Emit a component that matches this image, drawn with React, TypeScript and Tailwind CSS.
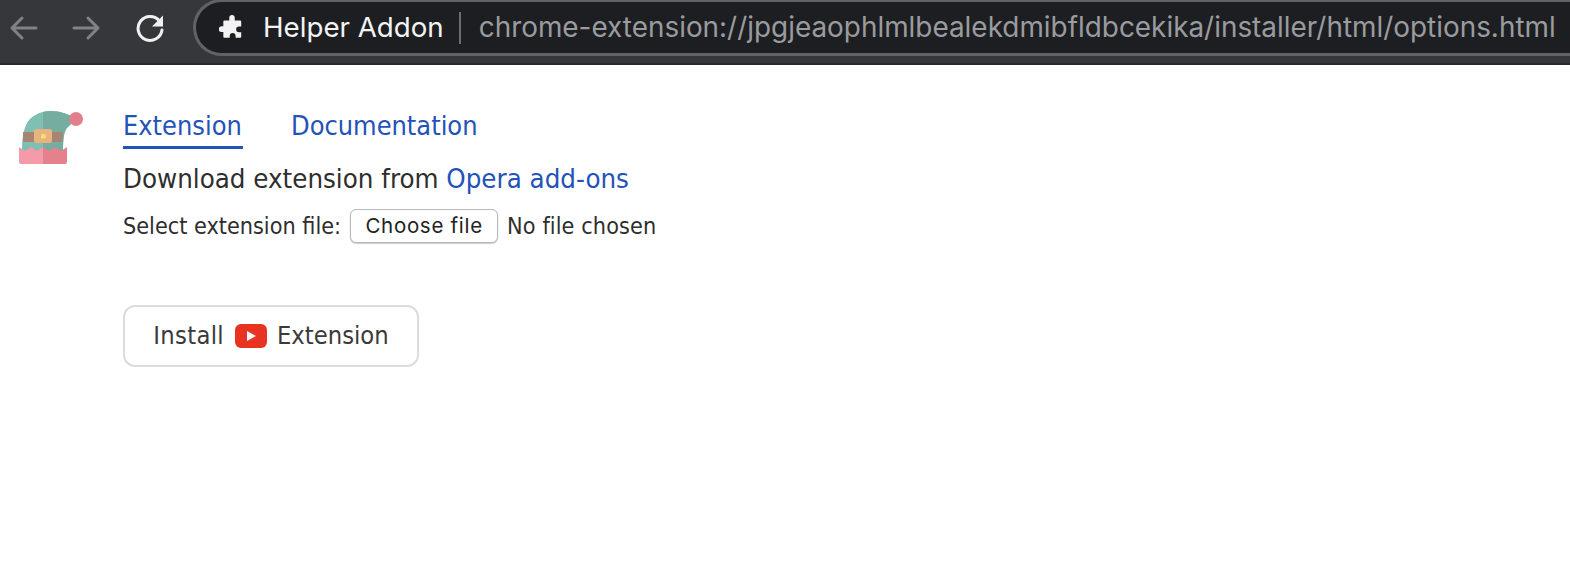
export default function App() {
  const body = { fontFamily: '"DejaVu Sans", sans-serif', fontStretch: 'condensed' };
  return (
    <div className="w-[1570px] h-[574px] bg-white overflow-hidden flex flex-col">
      <header className="h-[65px] shrink-0 bg-[#36373b] border-b-2 border-[#28292c] flex items-start">
        <div className="w-[193px] h-[56px] shrink-0 flex items-center text-[#818285]">
          <svg width="30" height="28" viewBox="0 0 30 28" className="ml-[8px]" fill="none" stroke="currentColor" strokeWidth="3" strokeLinecap="round" strokeLinejoin="round"><path d="M4 14h24M14 4 4 14l10 10" /></svg>
          <svg width="30" height="28" viewBox="0 0 30 28" className="ml-[34px]" fill="none" stroke="currentColor" strokeWidth="3" strokeLinecap="round" strokeLinejoin="round"><path d="M2 14h24M16 4l10 10-10 10" /></svg>
          <svg width="30" height="30" viewBox="0 0 30 30" className="ml-[33px] text-[#f1f1f2]" fill="none"><path d="M24.500 8A12 12 0 1 0 27 17" stroke="currentColor" strokeWidth="3" strokeLinecap="round" /><path d="M28 2.500v11H17z" fill="currentColor" /></svg>
        </div>
        <div className="flex-1 h-[57px] -mt-[1px] rounded-l-[29px] border-[3px] border-r-0 border-[#616266] bg-[#1d1e21] flex items-center pl-[23px] whitespace-nowrap" style={{ fontFamily: 'Inter, sans-serif' }}>
          <svg width="26" height="26" viewBox="0 0 24 24" className="shrink-0 text-[#f2f2f2]" fill="currentColor"><path d="M9.500 2.500a2.500 2.500 0 0 1 5 0V5h5a1 1 0 0 1 1 1v4.500h-2a2.700 2.700 0 0 0 0 5.400h2V20a1 1 0 0 1-1 1h-4.200v-1.600a2.700 2.700 0 0 0-5.400 0V21H5a1 1 0 0 1-1-1v-4.200H2.500a2.700 2.700 0 0 1 0-5.400H4V6a1 1 0 0 1 1-1h4.500z" /></svg>
          <span className="ml-[18px] text-[27.7px] text-[#f3f3f4]">Helper Addon</span>
          <span className="ml-[15px] w-[2px] h-[32px] bg-[#6c6d70]" />
          <span className="ml-[18px] text-[27.9px] text-[#9a9b9e]">chrome-extension://jpgjeaophlmlbealekdmibfldbcekika/installer/html/options.html</span>
        </div>
      </header>
      <main className="flex-1 flex pl-[18px] pt-[45px] whitespace-nowrap" style={body}>
        <svg width="66" height="54" viewBox="0 0 66 54" className="shrink-0">
          <path d="M4 42C4 30 5 22 8 15 12 6 22 1 33 1c9 0 18 3 25 8l-8 8C46 20 45 28 45 42z" fill="#80c0b2" />
          <path d="M25 2c2.500-.7 5-1 8-1 9 0 18 3 25 8l-8 8C46 20 45 28 45 42H25z" fill="#75ada1" />
          <circle cx="58" cy="9" r="7" fill="#e27f8c" />
          <path d="M5 22h39.500v10H5z" fill="#a88475" />
          <rect x="16" y="19" width="18" height="14" rx="2" fill="#e9b37f" />
          <rect x="23" y="24" width="5" height="4.500" rx="1.500" fill="#f5e06d" />
          <path d="M1 37l6 4 6-4 6 4 6-4v17H3a2 2 0 0 1-2-2z" fill="#f49aa8" />
          <path d="M25 37l6 4 6-4 6 4 6-4v15a2 2 0 0 1-2 2H25z" fill="#e5808d" />
        </svg>
        <div className="ml-[39px] flex flex-col items-start">
          <nav className="flex h-[40px] text-[#2352b8] text-[26.9px] leading-[32px]">
            <a className="w-[120px] h-[39px] border-b-[3px] border-[#2352b8]">Extension</a>
            <a className="ml-[48px]">Documentation</a>
          </nav>
          <p className="mt-[11px] text-[27.4px] leading-[36px] text-[#2e2e2e]">Download extension from <a className="text-[#2352b8]">Opera add-ons</a></p>
          <div className="mt-[12px] flex items-center h-[34px] text-[23.2px] text-[#2e2e2e]">
            <span>Select extension file:</span>
            <button className="ml-[9px] w-[148px] h-[34px] bg-white border border-[#b8b8b8] rounded-[6px] shadow-[0_1px_1px_rgba(0,0,0,0.2)] text-[20.500px] text-[#222] tracking-[0.7px]" style={{ fontFamily: 'Inter, sans-serif' }}>Choose file</button>
            <span className="ml-[9px] tracking-[0.1px]">No file chosen</span>
          </div>
          <button className="mt-[62px] w-[296px] h-[62px] border-2 border-[#dcdcdc] rounded-[12px] flex items-center justify-center text-[25.3px] text-[#3a3a3a]">
            <span className="tracking-[0.3px]">Install</span>
            <svg width="32" height="24" viewBox="0 0 32 24" className="ml-[11px] mr-[10px]"><rect width="32" height="24" rx="6" fill="#e83323" /><path d="M12 7l9 5-9 5z" fill="#fff" /></svg>
            <span>Extension</span>
          </button>
        </div>
      </main>
    </div>
  );
}
